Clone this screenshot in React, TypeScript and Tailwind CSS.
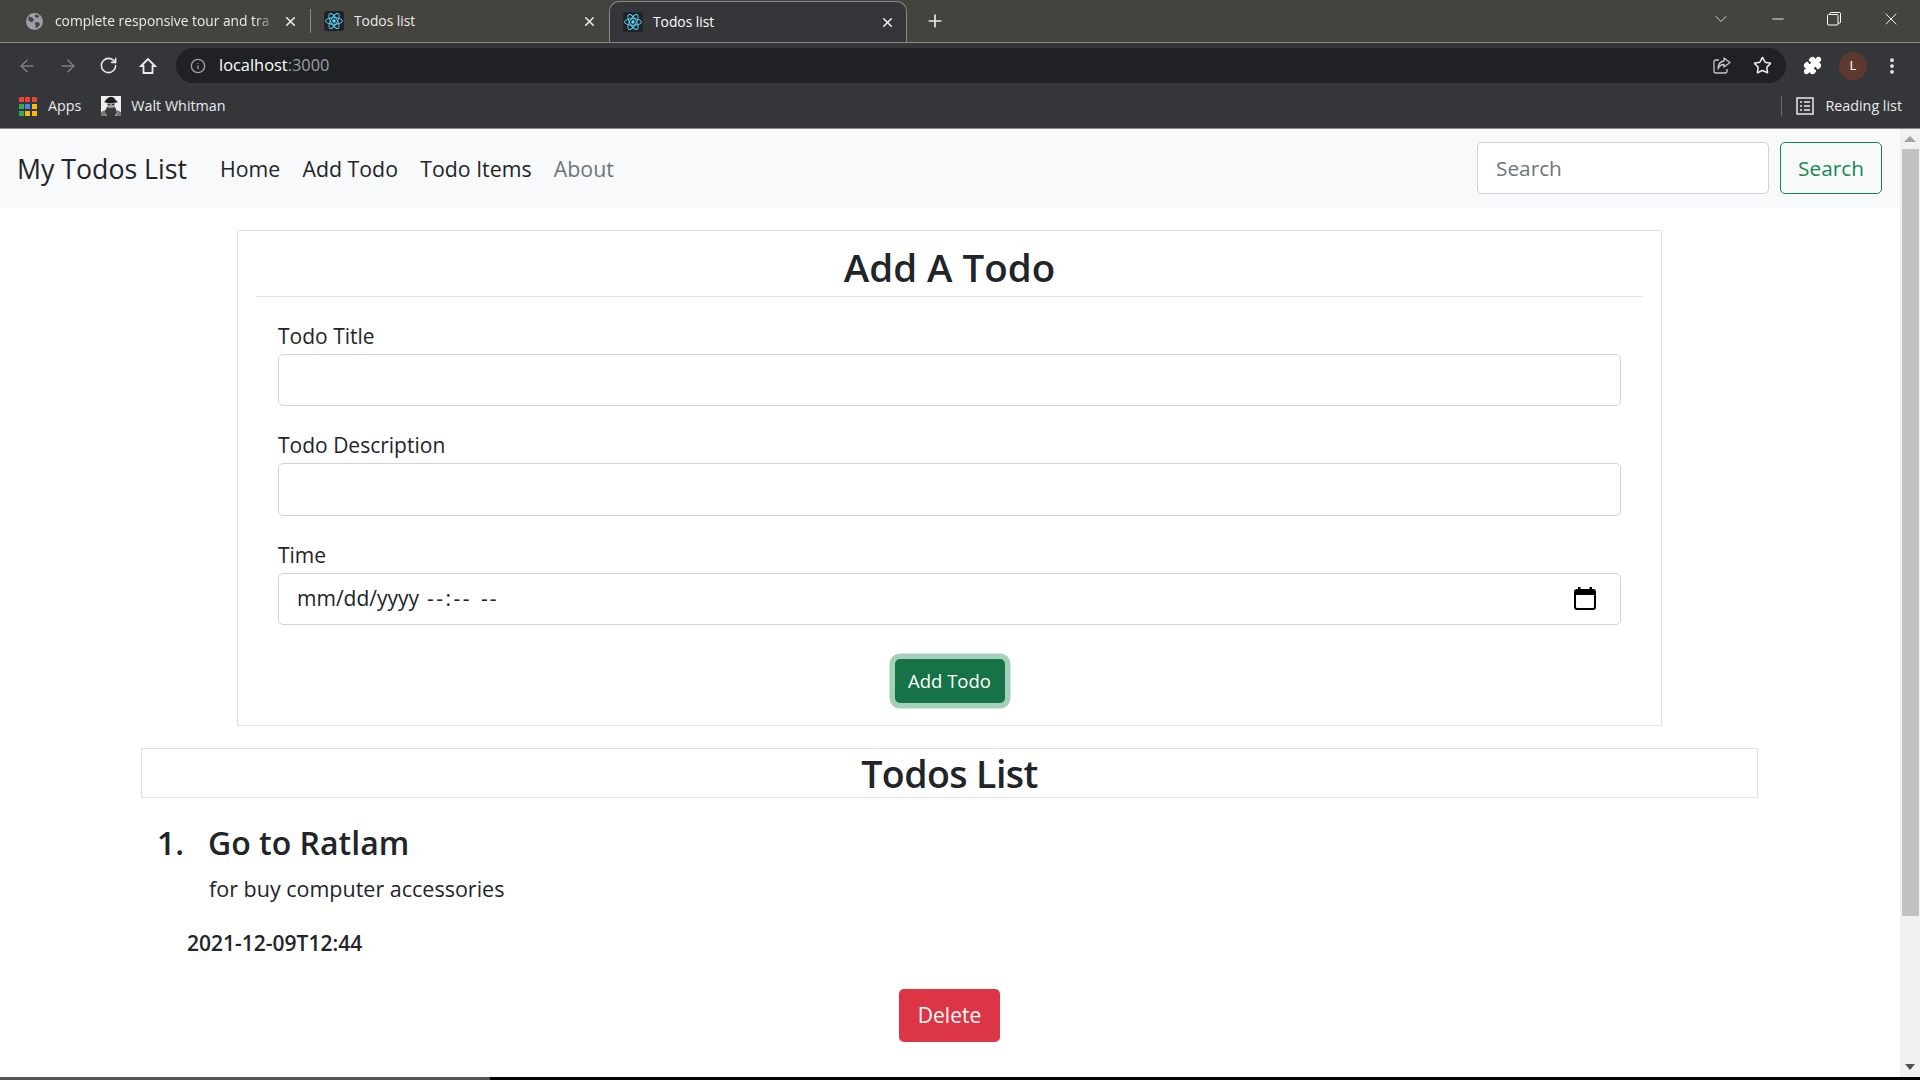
import { ChevronDown, Minus, Plus, X, ArrowLeft, ArrowRight, RotateCw, Info, Star, Puzzle, MoreVertical } from "lucide-react";

const SANS = "font-['Open_Sans','Noto_Sans',sans-serif]";

function ReactIcon() {
  return (
    <svg width="20" height="20" viewBox="0 0 20 20" className="shrink-0 rounded-[3px] bg-[#20232a]">
      <g fill="none" stroke="#61dafb" strokeWidth="0.9">
        <ellipse cx="10" cy="10" rx="8.5" ry="3.3" />
        <ellipse cx="10" cy="10" rx="8.5" ry="3.3" transform="rotate(60 10 10)" />
        <ellipse cx="10" cy="10" rx="8.5" ry="3.3" transform="rotate(120 10 10)" />
      </g>
      <circle cx="10" cy="10" r="1.7" fill="#61dafb" />
    </svg>
  );
}

function GlobeIcon() {
  return (
    <svg width="17" height="17" viewBox="0 0 17 17" className="shrink-0">
      <circle cx="8.5" cy="8.5" r="8.5" fill="#9aa0a6" />
      <path d="M3 3.5l3 1 2 2-1 2-2.500 .5-2.500-2.500zM9 1.500l4 1-1 2.500-3-1zM9 9l4 .5 1 2-3 3.500-1.500-.5V12z" fill="#45433e" />
    </svg>
  );
}

function AppsIcon() {
  const colors = ["#ea4335", "#ea4335", "#ea4335", "#34a853", "#4285f4", "#fbbc04", "#34a853", "#fbbc04", "#fbbc04"];
  return (
    <div className="grid grid-cols-3 gap-[2px] w-[17px] shrink-0">
      {colors.map((c, i) => (
        <svg key={i} width="5" height="5" className="block">
          <rect width="5" height="5" fill={c} />
        </svg>
      ))}
    </div>
  );
}

function PortraitIcon() {
  return (
    <svg width="20" height="20" viewBox="0 0 20 20" className="shrink-0">
      <rect width="20" height="20" fill="#efefef" />
      <path d="M3 6c1.500-.5 2-4 6-5 4-.5 5 2 6 3.500l2 1.500c-3 1.500-11 1.500-14 0z" fill="#1d1d1d" />
      <path d="M6 7h8l-.5 5-1 2h-5l-1-2z" fill="#9a9a9a" />
      <path d="M7 8h2v1H7zM11 8h2v1h-2z" fill="#2a2a2a" />
      <path d="M6 11l2 1h4l2-1 2 5-2 4H6l-2.500-4z" fill="#3a3a3a" />
      <path d="M16 14l4 2v4h-5zM4 14l-4 2v4h5z" fill="#777" />
    </svg>
  );
}

function ReadingIcon() {
  return (
    <svg width="18" height="18" viewBox="0 0 18 18" className="shrink-0" fill="none" stroke="#e8eaed" strokeWidth="1.500">
      <rect x="1" y="1" width="16" height="16" />
      <path d="M4 5h2M8 5h6M4 9h2M8 9h6M4 13h2M8 13h6" />
    </svg>
  );
}

function HomeOutline() {
  return (
    <svg width="18" height="18" viewBox="0 0 18 18" fill="none" stroke="#e8eaed" strokeWidth="1.800" className="shrink-0">
      <path d="M9 2L2 9h2.500v7h9V9H16z" strokeLinejoin="miter" />
    </svg>
  );
}

function ShareOutline() {
  return (
    <svg width="18" height="18" viewBox="0 0 18 18" fill="none" stroke="#c4c7c5" strokeWidth="1.300" className="shrink-0">
      <path d="M6 3H3a2 2 0 0 0-2 2v9a2 2 0 0 0 2 2h9a2 2 0 0 0 2-2v-2" />
      <path d="M11 1l6 4.500L11 10V7.500C8 7.500 6 9 5 12c0-4 2-7.500 6-8z" strokeLinejoin="round" />
    </svg>
  );
}

function CalendarIcon() {
  return (
    <svg width="22" height="23" viewBox="0 0 22 23" className="shrink-0">
      <rect x="1" y="3" width="20" height="19" rx="2" fill="none" stroke="#000" strokeWidth="2" />
      <rect x="1" y="3" width="20" height="5" fill="#000" />
      <rect x="4" y="0" width="2.500" height="4" fill="#000" />
      <rect x="15.500" y="0" width="2.500" height="4" fill="#000" />
    </svg>
  );
}

function Tab({ title, active, width }: { title: string; active?: boolean; width: string }) {
  return (
    <div className={`${width} flex items-center shrink-0 ${active ? "h-[41px] bg-[#35363a] border border-b-0 border-[#8a8a86] rounded-t-[10px] pl-[13px] pr-[11px] mt-px" : "h-[42px] pl-[13px] pr-[12px]"}`}>
      <ReactIcon />
      <span className={`ml-[10px] flex-1 overflow-hidden whitespace-nowrap text-[13.800px] ${active ? "text-white" : "text-[#e8eaed]"}`}>{title}</span>
      <X size={15} strokeWidth={2.500} className="text-[#e8eaed] shrink-0" />
    </div>
  );
}

function BrowserChrome() {
  return (
    <div className={`shrink-0 ${SANS}`}>
      <div className="h-[43px] bg-[#45433e] border-b border-[#8a8a86] flex items-start">
        <div className="w-[310px] h-[42px] flex items-center pl-[26px] pr-[12px] shrink-0">
          <GlobeIcon />
          <span className="ml-[12px] flex-1 whitespace-nowrap text-[13.800px] text-[#e8eaed] [mask-image:linear-gradient(to_right,black_90%,transparent)]">complete responsive tour and tra</span>
          <X size={15} strokeWidth={2.500} className="text-[#e8eaed] shrink-0 ml-[6px]" />
        </div>
        <div className="w-px h-[24px] bg-[#8a8a86] mt-[9px] shrink-0" />
        <Tab title="Todos list" width="w-[298px]" />
        <Tab title="Todos list" width="w-[298px] z-10" active />
        <Plus size={20} strokeWidth={2} className="text-[#e8eaed] ml-[18px] mt-[11px] shrink-0" />
        <div className="flex-1" />
        <ChevronDown size={20} strokeWidth={1} className="text-[#e8eaed] mt-[9px]" />
        <Minus size={18} strokeWidth={1.200} className="text-white ml-[38px] mt-[10px]" />
        <svg width="14" height="14" viewBox="0 0 14 14" fill="none" stroke="white" strokeWidth="1" className="ml-[40px] mt-[12px]">
          <rect x="0.500" y="2.500" width="10.500" height="10.500" rx="1" />
          <path d="M3 2.500V1.500a1 1 0 0 1 1-1h8.500a1 1 0 0 1 1 1V10a1 1 0 0 1-1 1H11" />
        </svg>
        <X size={20} strokeWidth={1.100} className="text-white ml-[40px] mr-[19px] mt-[9px]" />
      </div>

      <div className="h-[45px] bg-[#35363a] flex items-center pl-[17px] pr-[15px]">
        <ArrowLeft size={20} strokeWidth={1.800} className="text-[#7e7f82]" />
        <ArrowRight size={20} strokeWidth={1.800} className="text-[#7e7f82] ml-[21px]" />
        <RotateCw size={19} strokeWidth={2} className="text-[#e8eaed] ml-[21px]" />
        <div className="ml-[21px]"><HomeOutline /></div>
        <div className="ml-[19px] w-[1610px] h-[35px] rounded-full bg-[#202124] flex items-center pl-[14px] pr-[14px]">
          <Info size={16} strokeWidth={2} className="text-[#9aa0a6]" />
          <span className="ml-[13px] text-[16.400px] text-white">localhost<span className="text-[#9aa0a6]">:3000</span></span>
          <div className="flex-1" />
          <ShareOutline />
          <Star size={19} strokeWidth={2} className="text-[#e8eaed] ml-[22px]" />
        </div>
        <Puzzle size={19} strokeWidth={2} className="text-white fill-white ml-[17px]" />
        <div className="ml-[17px] w-[28px] h-[28px] rounded-full bg-[#5d3a2e] flex items-center justify-center text-[13px] text-white">L</div>
        <MoreVertical size={20} strokeWidth={2.500} className="text-[#e8eaed] ml-[15px]" />
      </div>

      <div className="h-[41px] pb-[4px] bg-[#35363a] border-b border-[#8a8a86] flex items-center pl-[19px] pr-[18px] text-[14.300px] text-[#e8eaed]">
        <AppsIcon />
        <span className="ml-[12px]">Apps</span>
        <div className="ml-[20px]"><PortraitIcon /></div>
        <span className="ml-[10px]">Walt Whitman</span>
        <div className="flex-1" />
        <div className="w-px h-[20px] bg-[#6e6f72]" />
        <div className="ml-[14px]"><ReadingIcon /></div>
        <span className="ml-[11px]">Reading list</span>
      </div>
    </div>
  );
}

function Navbar() {
  return (
    <nav className="h-[79px] bg-[#f8f9fa] flex items-center pl-[17px] pr-[18px]">
      <span className="mt-px text-[26.700px] text-[#212529]">My Todos List</span>
      <div className="flex items-center mt-px ml-[33px] gap-[22.300px] text-[21.300px] text-[#212529]">
        <span>Home</span>
        <span>Add Todo</span>
        <span>Todo Items</span>
        <span className="text-[#6c757d]">About</span>
      </div>
      <div className="flex-1" />
      <input
        placeholder="Search"
        className="w-[292px] h-[52px] mb-px bg-white border border-[#ced4da] rounded-[5px] px-[18px] text-[20.800px] placeholder:text-[#6c757d] outline-none"
      />
      <button className="ml-[11px] w-[102px] h-[52px] mb-px pt-px border border-[#198754] text-[#198754] rounded-[5px] text-[20.800px]">Search</button>
    </nav>
  );
}

function Field({ label, children }: { label: string; children: React.ReactNode }) {
  return (
    <div className="mb-[22px]">
      <label className="block text-[21px] leading-[35px] text-[#212529]">{label}</label>
      {children}
    </div>
  );
}

const INPUT = "block w-full h-[52.500px] bg-white border border-[#ced4da] rounded-[5px] px-[18px] text-[21px] text-[#212529] outline-none";

function AddTodo() {
  return (
    <div className="w-[1425px] h-[496px] ml-[237px] mt-[22px] border border-[#dee2e6] px-[18px]">
      <h2 className="h-[66px] border-b border-[#dee2e6] text-center text-[38.500px] leading-[72px] font-semibold text-[#212529]">Add A Todo</h2>
      <div className="px-[22px] pt-[21.500px]">
        <Field label="Todo Title"><input className={INPUT} /></Field>
        <Field label="Todo Description"><input className={INPUT} /></Field>
        <Field label="Time">
          <div className={`${INPUT} flex items-center pr-[24px]`}>
            <span>mm/dd/yyyy</span>
            <span className="ml-[8px] tracking-[2.500px]">--:--</span>
            <span className="ml-[9px] tracking-[1.800px]">--</span>
            <div className="flex-1" />
            <CalendarIcon />
          </div>
        </Field>
        <div className="flex justify-center mt-[34px]">
          <button className="w-[110px] h-[44px] rounded-[5px] bg-[#157347] text-white text-[18.500px] ring-[5.500px] ring-[#a3cfbb]">Add Todo</button>
        </div>
      </div>
    </div>
  );
}

function TodosList() {
  return (
    <div className="w-[1617px] ml-[141px] mt-[22px]">
      <h3 className="h-[50px] border border-[#dee2e6] text-center text-[37.500px] tracking-[-0.015em] leading-[50px] font-semibold text-[#212529]">Todos List</h3>
      <div className="flex items-baseline ml-[16px] mt-[21px] text-[32px] font-semibold leading-[48px] text-[#212529]">
        <span className="w-[51px]">1.</span>
        <span>Go to Ratlam</span>
      </div>
      <p className="ml-[68px] mt-[5px] text-[21.500px] leading-[33px] text-[#212529]">for buy computer accessories</p>
      <p className="ml-[46px] mt-[21.500px] text-[21px] leading-[33px] font-semibold text-[#212529]">2021-12-09T12:44</p>
      <div className="flex justify-center mt-[29.500px]">
        <button className="w-[101px] h-[53px] rounded-[5px] bg-[#dc3545] text-white text-[21px]">Delete</button>
      </div>
    </div>
  );
}

function Scrollbar() {
  return (
    <div className="w-[20px] shrink-0 bg-[#f1f1f1] flex flex-col items-center">
      <div className="h-[20px] flex items-center justify-center">
        <div className="w-0 h-0 border-x-[6px] border-x-transparent border-b-[6px] border-b-[#a3a3a3]" />
      </div>
      <div className="w-[17px] h-[767px] bg-[#c1c1c1]" />
      <div className="flex-1" />
      <div className="h-[20px] flex items-center justify-center">
        <div className="w-0 h-0 border-x-[5px] border-x-transparent border-t-[6px] border-t-[#505050]" />
      </div>
    </div>
  );
}

export default function App() {
  return (
    <div className={`h-screen w-screen overflow-hidden flex flex-col bg-white ${SANS}`}>
      <BrowserChrome />
      <div className="flex flex-1 min-h-0">
        <div className="flex-1 min-w-0 overflow-hidden">
          <Navbar />
          <AddTodo />
          <TodosList />
        </div>
        <Scrollbar />
      </div>
      <div className="h-[3px] shrink-0 bg-black flex">
        <div className="w-[490px] bg-[#555555]" />
      </div>
    </div>
  );
}
